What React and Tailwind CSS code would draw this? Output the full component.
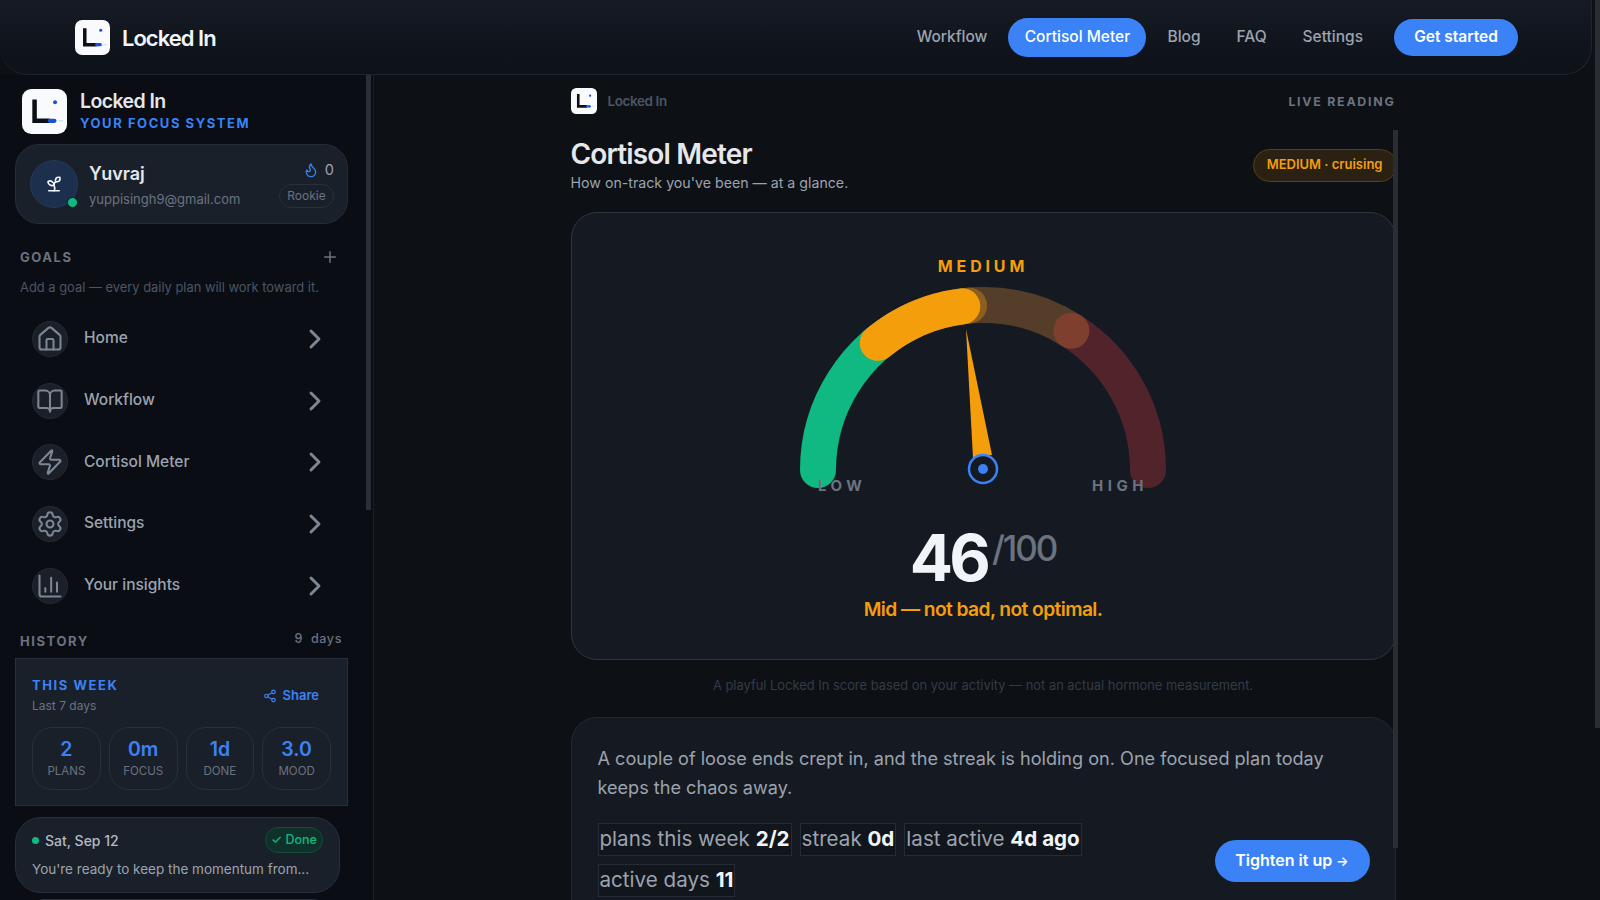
import React from 'react';
import { Home, BookOpen, Zap, Settings, BarChart3, ChevronRight, Plus, Sprout, Flame, Share2 } from 'lucide-react';

const menu = [
    { label: 'Home', icon: Home },
    { label: 'Workflow', icon: BookOpen },
    { label: 'Cortisol Meter', icon: Zap },
    { label: 'Settings', icon: Settings },
    { label: 'Your insights', icon: BarChart3 }
];

const stats = [
    { value: '2', label: 'PLANS' },
    { value: '0m', label: 'FOCUS' },
    { value: '1d', label: 'DONE' },
    { value: '3.0', label: 'MOOD' }
];

const chips = [
    { label: 'plans this week', value: '2/2' },
    { label: 'streak', value: '0d' },
    { label: 'last active', value: '4d ago' },
    { label: 'active days', value: '11' }
];

// gauge runs 0..100 over a half circle
const CX = 200;
const CY = 190;
const R = 165;

const arc = (from, to) => {
    const point = (v) => {
        const a = (v / 100) * Math.PI;
        return `${(CX - R * Math.cos(a)).toFixed(2)} ${(CY - R * Math.sin(a)).toFixed(2)}`;
    };
    return `M ${point(from)} A ${R} ${R} 0 0 1 ${point(to)}`;
};

function Logo({ className }) {
    return (
        <svg viewBox="0 0 34 34" className={className}>
            <rect x="0" y="0" width="34" height="34" rx="7" fill="#f8fafc" />
            <path d="M9.5 8 V24 H21" fill="none" stroke="#0b0f16" strokeWidth="3.4" />
            <path d="M21 24 H24.5" fill="none" stroke="#1d4ed8" strokeWidth="3.2" strokeLinecap="round" />
            <path d="M27.5 24 H31" fill="none" stroke="#bfdbfe" strokeWidth="0.8" />
            <circle cx="25" cy="10" r="1.5" fill="#1d4ed8" />
        </svg>
    );
}

function Header() {
    return (
        <header className="h-[75px] w-[1592px] shrink-0 flex items-center justify-between pl-[75px] pr-[73px] rounded-b-[28px] border-b border-r border-[#1f2530] bg-gradient-to-b from-[#151a24] to-[#0d1118]">
            <div className="flex items-center gap-[12px]">
                <Logo className="w-[35px] h-[35px]" />
                <span className="pt-[2px] text-[22px] font-semibold tracking-[-0.045em] text-[#f1f5f9]">Locked In</span>
            </div>
            <nav className="flex items-center text-[15.5px] font-medium text-[#9ca3af]">
                <a className="mr-[21px]">Workflow</a>
                <a className="h-[39px] w-[138px] flex items-center justify-center rounded-full bg-[#3b82f6] text-white">Cortisol Meter</a>
                <a className="ml-[21px] mr-[36px]">Blog</a>
                <a className="mr-[36px]">FAQ</a>
                <a className="mr-[31px]">Settings</a>
                <a className="h-[37px] w-[124px] flex items-center justify-center rounded-full bg-[#3b82f6] text-white font-semibold">Get started</a>
            </nav>
        </header>
    );
}

function Sidebar() {
    return (
        <aside className="relative w-[374px] shrink-0 border-r border-[#1a1e26] bg-[#0a0d13] overflow-hidden">
            <div className="absolute left-[366px] top-0 w-[5px] h-[435px] bg-[#2a2e36]" />
            <div className="flex items-center gap-[13px] pl-[22px] pt-[14px]">
                <Logo className="w-[45px] h-[45px]" />
                <div className="-translate-y-[2px]">
                    <div className="text-[19.5px] leading-[26px] font-semibold tracking-[-0.03em] text-[#e5e7eb]">Locked In</div>
                    <div className="text-[13px] leading-[18px] font-bold tracking-[0.12em] text-[#3b82f6]">YOUR FOCUS SYSTEM</div>
                </div>
            </div>

            <div className="ml-[15px] mt-[10px] w-[333px] h-[80px] rounded-[24px] border border-[#262c37] bg-[#1a202a] flex items-center pl-[14px] pr-[13px]">
                <div className="relative w-[48px] h-[48px] rounded-full bg-[#1c2f4c] border border-[#24395a] flex items-center justify-center">
                    <Sprout className="w-[18px] h-[18px] text-[#f1f5f9]" strokeWidth={2.2} />
                    <span className="absolute right-[-1px] bottom-[-1px] w-[11px] h-[11px] rounded-full bg-[#10b981] border border-[#0f172a]" />
                </div>
                <div className="ml-[11px] pt-[3px]">
                    <div className="text-[18px] leading-[26px] font-semibold text-[#e5e7eb]">Yuvraj</div>
                    <div className="mt-[1px] text-[13px] leading-[22px] text-[#6b7280]">yuppisingh9@gmail.com</div>
                </div>
                <div className="ml-auto flex flex-col items-end gap-[4px]">
                    <div className="flex items-center gap-[6px] text-[14.5px] leading-[20px] text-[#9ca3af]">
                        <Flame className="w-[16px] h-[18px] text-[#3b82f6]" />
                        <span>0</span>
                    </div>
                    <span className="w-[55px] h-[24px] flex items-center justify-center rounded-full border border-[#2a303b] text-[12px] text-[#6b7280]">Rookie</span>
                </div>
            </div>

            <div className="ml-[20px] mr-[34px] mt-[23px] flex items-center justify-between">
                <span className="text-[13px] leading-[20px] font-bold tracking-[0.12em] text-[#6b7280]">GOALS</span>
                <Plus className="w-[18px] h-[18px] text-[#6b7280]" />
            </div>
            <p className="ml-[20px] mt-[11px] text-[12.9px] leading-[20px] text-[#4b5563]">Add a goal — every daily plan will work toward it.</p>

            <div className="mt-[10px] flex flex-col">
                {menu.map((item) => (
                    <div key={item.label} className="h-[61.7px] flex items-center pl-[32px] pr-[42px]">
                        <span className="shrink-0 w-[36px] h-[36px] rounded-full bg-[#1a1f28] border border-[#252a33] flex items-center justify-center">
                            <item.icon className="shrink-0 w-[28px] h-[28px] text-[#7d8794]" strokeWidth={1.75} />
                        </span>
                        <span className="ml-[16px] mb-[2px] text-[15.5px] font-medium text-[#9ca3af]">{item.label}</span>
                        <ChevronRight className="ml-auto w-[32px] h-[32px] text-[#7d8794]" strokeWidth={2.2} />
                    </div>
                ))}
            </div>

            <div className="ml-[20px] mr-[31px] mt-[15px] h-[20px] flex items-center justify-between text-[#6b7280]">
                <span className="text-[13px] leading-[20px] font-bold tracking-[0.12em]">HISTORY</span>
                <span className="-translate-y-[2px] text-[12.5px] leading-[20px] font-medium tracking-[0.05em] [word-spacing:4px]">9 days</span>
            </div>

            <div className="ml-[15px] mt-[7px] w-[333px] h-[148px] border border-[#2a303a] bg-[#1a202a] px-[16px] pt-[17px]">
                <div className="flex items-center justify-between pr-[12px]">
                    <div>
                        <div className="text-[13px] leading-[18px] font-bold tracking-[0.12em] text-[#3b82f6]">THIS WEEK</div>
                        <div className="mt-[3px] text-[12px] leading-[18px] text-[#6b7280]">Last 7 days</div>
                    </div>
                    <div className="flex items-center gap-[6px] text-[13px] font-semibold text-[#3b82f6]">
                        <Share2 className="w-[14px] h-[14px]" />
                        <span>Share</span>
                    </div>
                </div>
                <div className="mt-[12px] flex gap-[8px]">
                    {stats.map((s) => (
                        <div key={s.label} className="w-[69px] h-[63px] rounded-[20px] border border-[#2a303a] flex flex-col items-center justify-center">
                            <span className="text-[19.5px] leading-[24px] font-semibold text-[#3b82f6]">{s.value}</span>
                            <span className="text-[11.5px] leading-[20px] text-[#6b7280]">{s.label}</span>
                        </div>
                    ))}
                </div>
            </div>

            <div className="ml-[15px] mt-[11px] w-[325px] h-[76px] rounded-[26px] border border-[#2a303a] bg-[#1a202a] pl-[16px] pr-[16px] pt-[9px]">
                <div className="flex items-center">
                    <span className="w-[7px] h-[7px] rounded-full bg-[#10b981]" />
                    <span className="ml-[6px] text-[14px] font-medium text-[#b4bac4]">Sat, Sep 12</span>
                    <span className="ml-auto w-[58px] h-[26px] flex items-center justify-center rounded-full bg-[#10302a] border border-[#164a3a] text-[12.5px] font-medium text-[#10b981]">✓ Done</span>
                </div>
                <p className="mt-[5px] text-[13.5px] leading-[22px] text-[#9ca3af]">You're ready to keep the momentum from...</p>
            </div>
            <div className="ml-[32px] mt-[6px] w-[293px] h-[20px] rounded-t-[12px] border-t border-[#2a303a] bg-[#1a202a]" />
        </aside>
    );
}

function Gauge() {
    return (
        <div className="relative w-[400px] h-[210px]">
            <svg viewBox="0 0 400 210" className="w-[400px] h-[210px]">
                <g fill="none" strokeWidth="36" strokeLinecap="round">
                    <path d={arc(0, 36)} stroke="#10b981" />
                    <path d={arc(28, 68)} stroke="#e8913a" strokeOpacity="0.3" />
                    <path d={arc(68, 100)} stroke="#ef4444" strokeOpacity="0.27" />
                    <path d={arc(28, 47.3)} stroke="#f59e0b" strokeOpacity="0.35" />
                    <path d={arc(28, 46)} stroke="#f59e0b" />
                </g>
                <polygon points="183,49 190,178 209,175" fill="#f59e0b" />
                <circle cx="200" cy="189" r="14" fill="#151a22" stroke="#3b82f6" strokeWidth="2.5" />
                <circle cx="200" cy="189" r="5" fill="#3b82f6" />
            </svg>
            <span className="absolute left-[35px] top-[196px] text-[15px] leading-[20px] font-bold tracking-[0.3em] text-[#6b7280]">LOW</span>
            <span className="absolute left-[309px] top-[196px] text-[15px] leading-[20px] font-bold tracking-[0.3em] text-[#6b7280]">HIGH</span>
        </div>
    );
}

function Main() {
    return (
        <main className="flex-1 min-w-0 overflow-hidden pr-[8px]">
            <div className="relative mx-auto w-[825px]">
                <div className="absolute left-[822px] top-[55px] w-[5px] h-[718px] bg-[#2a2d33]" />
                <div className="pt-[13px] h-[39px] flex items-center justify-between">
                    <div className="flex items-center gap-[11px]">
                        <Logo className="w-[26px] h-[26px]" />
                        <span className="text-[13.5px] font-semibold tracking-[-0.03em] text-[#4b5563]">Locked In</span>
                    </div>
                    <span className="pt-[2px] text-[12.4px] font-bold tracking-[0.14em] text-[#6b7280]">LIVE READING</span>
                </div>

                <div className="mt-[23px] flex items-center justify-between">
                    <div>
                        <h1 className="text-[28px] leading-[34px] font-semibold tracking-[-0.03em] text-[#e5e7eb]">Cortisol Meter</h1>
                        <p className="mt-[2px] text-[14.2px] leading-[20px] text-[#9ca3af]">How on-track you've been — at a glance.</p>
                    </div>
                    <span className="mr-[-1px] h-[33px] px-[13px] flex items-center rounded-full border border-[#5a4015] bg-[#2a2112] text-[13px] font-semibold text-[#f59e0b]">MEDIUM · cruising</span>
                </div>

                <section className="mt-[19px] h-[448px] rounded-[26px] border border-[#2e343e] bg-[#151a22] flex flex-col items-center pt-[43px]">
                    <div className="text-[16px] leading-[20px] font-bold tracking-[0.24em] text-[#f59e0b]">MEDIUM</div>
                    <div className="mt-[4px]"><Gauge /></div>
                    <div className="mt-[36px] flex items-start gap-[5px]">
                        <span className="text-[64px] leading-[64px] font-bold tracking-[-0.06em] text-[#f1f5f9]">46</span>
                        <span className="mt-[2px] text-[35px] leading-[40px] font-medium tracking-[-0.06em] text-[#6b7280]">/100</span>
                    </div>
                    <div className="mt-[5px] text-[19.2px] leading-[28px] font-semibold tracking-[-0.03em] text-[#f59e0b]">Mid — not bad, not optimal.</div>
                </section>

                <p className="mt-[16px] h-[41px] text-center text-[12.9px] leading-[20px] text-[#333b47]">A playful Locked In score based on your activity — not an actual hormone measurement.</p>

                <section className="h-[300px] rounded-t-[26px] border border-[#232933] bg-[#151a22] px-[26px] pt-[26px]">
                    <p className="text-[18.1px] leading-[29px] text-[#9ca3af]">A couple of loose ends crept in, and the streak is holding on. One focused plan today keeps the chaos away.</p>
                    <div className="mt-[21px] flex items-start justify-between">
                        <div className="w-[600px] flex flex-wrap gap-x-[8px] gap-y-[8px]">
                            {chips.map((c) => (
                                <span key={c.label} className="h-[33px] px-[1px] flex items-center border border-[#262c36] bg-[#11151c] text-[20.6px] text-[#9ca3af]">
                                    {c.label}&nbsp;<b className="font-bold text-[#f1f5f9]">{c.value}</b>
                                </span>
                            ))}
                        </div>
                        <button className="mt-[17px] mr-[-1px] w-[155px] h-[42px] pb-[3px] rounded-full bg-[#3b82f6] text-[16px] font-semibold text-white">Tighten it up <span className="text-[13px]">→</span></button>
                    </div>
                </section>
            </div>
        </main>
    );
}

export default function App() {
    return (
        <div className="relative w-[1600px] h-[900px] overflow-hidden bg-[#0d1015] font-['Inter',sans-serif] flex flex-col">
            <div className="absolute right-0 top-0 w-[5px] h-[728px] bg-[#2a2d33]" />
            <Header />
            <div className="flex-1 min-h-0 flex">
                <Sidebar />
                <Main />
            </div>
        </div>
    );
}
